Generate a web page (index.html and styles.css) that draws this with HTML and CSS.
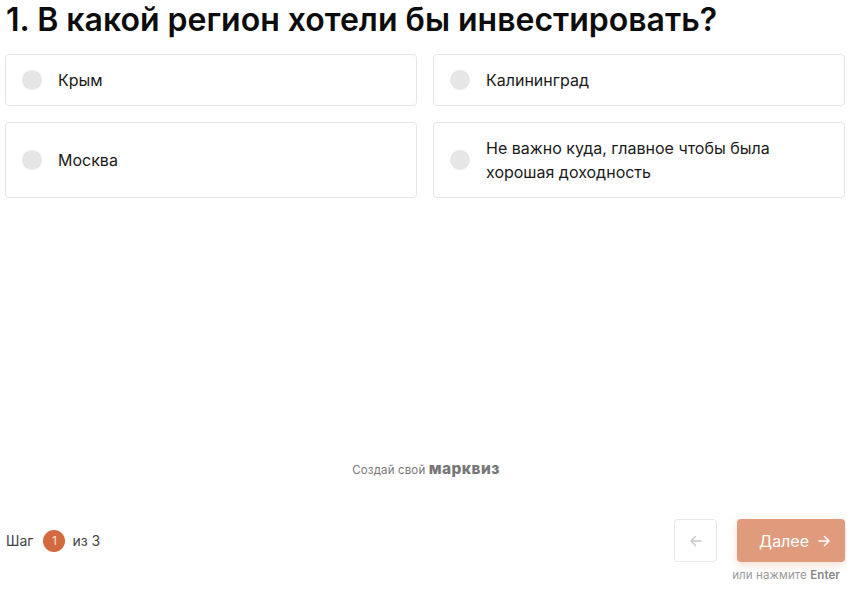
FILE: index.html
```html
<!DOCTYPE html>
<html lang="ru">
<head>
<meta charset="utf-8">
<link rel="stylesheet" href="styles.css">
</head>
<body>
<div class="page">
  <h1 class="title">1. В какой регион хотели бы инвестировать?</h1>
  <div class="options">
    <label class="option"><span class="radio"></span><span class="opt-text">Крым</span></label>
    <label class="option"><span class="radio"></span><span class="opt-text">Калининград</span></label>
    <label class="option tall"><span class="radio"></span><span class="opt-text">Москва</span></label>
    <label class="option tall"><span class="radio"></span><span class="opt-text">Не важно куда, главное чтобы была хорошая доходность</span></label>
  </div>
  <div class="spacer"></div>
  <div class="brand">Создай свой <b>марквиз</b></div>
  <div class="footer">
    <div class="step">Шаг <span class="badge">1</span> из 3</div>
    <div class="nav">
      <div class="buttons">
        <button class="back" type="button">
          <svg width="14" height="14" viewBox="0 0 14 14" fill="none" stroke="#c8c8c8" stroke-width="1.4" stroke-linecap="round" stroke-linejoin="round"><path d="M12 7H2M6.5 2.5L2 7l4.5 4.5"/></svg>
        </button>
        <button class="next" type="button">Далее
          <svg width="14" height="14" viewBox="0 0 14 14" fill="none" stroke="#fff" stroke-width="1.6" stroke-linecap="round" stroke-linejoin="round"><path d="M2 7h10M7.5 2.5L12 7l-4.5 4.5"/></svg>
        </button>
      </div>
      <div class="hint">или нажмите <b>Enter</b></div>
    </div>
  </div>
</div>
</body>
</html>
```
FILE: styles.css
```css
* { box-sizing: border-box; }
html, body { margin: 0; padding: 0; background: #fff; }
body { font-family: Inter, "Noto Sans", sans-serif; color: #111; }
.page {
  width: 847px;
  height: 589px;
  padding: 0 2px 0 5px;
  display: flex;
  flex-direction: column;
}
.title {
  margin: 0;
  padding: 0 0 0 1px;
  font-size: 32px;
  line-height: 39px;
  font-weight: 600;
  color: #0c0c0c;
  letter-spacing: 0;
}
.options {
  margin-top: 15px;
  display: grid;
  grid-template-columns: 412px 412px;
  column-gap: 16px;
  row-gap: 16px;
}
.option {
  display: flex;
  align-items: center;
  min-height: 52px;
  border: 1px solid #e5e5e5;
  border-radius: 4px;
  padding: 10px 16px 10px 16px;
}
.option.tall { min-height: 76px; }
.radio {
  flex: none;
  width: 20px;
  height: 20px;
  border-radius: 50%;
  background: #e6e6e6;
  margin-right: 16px;
}
.opt-text {
  font-size: 16px;
  line-height: 24px;
  color: #1a1a1a;
}
.spacer { flex: 1; }
.brand {
  text-align: center;
  font-size: 11.5px;
  color: #777;
  margin-bottom: 41px;
  margin-right: -2px;
  letter-spacing: 0.15px;
}
.brand b { font-size: 15.5px; font-weight: 800; color: #777; letter-spacing: 0.4px; }
.footer {
  display: flex;
  justify-content: space-between;
  align-items: flex-start;
  padding-bottom: 7px;
}
.step {
  display: flex;
  align-items: center;
  height: 43px;
  font-size: 14px;
  color: #444;
  padding-left: 1px;
}
.badge {
  display: inline-flex;
  align-items: center;
  justify-content: center;
  width: 22px;
  height: 22px;
  border-radius: 50%;
  background: #d2693f;
  color: #fbe3d8;
  font-size: 12px;
  margin: 0 7px 0 10px;
}
.nav { display: flex; flex-direction: column; align-items: flex-end; }
.buttons { display: flex; gap: 20px; }
.back {
  width: 43px;
  height: 43px;
  border: 1px solid #e8e8e8;
  border-radius: 4px;
  background: #fff;
  display: flex;
  align-items: center;
  justify-content: center;
  padding: 0;
}
.next {
  width: 108px;
  height: 43px;
  border: none;
  border-radius: 4px;
  background: #e09a7c;
  color: #fff;
  font-family: Inter, "Noto Sans", sans-serif;
  font-size: 16px;
  display: flex;
  align-items: center;
  justify-content: center;
  gap: 8px;
  padding: 0 0 0 8px;
  box-shadow: 0 3px 8px rgba(224, 154, 124, 0.35);
}
.hint {
  margin-top: 6px;
  margin-right: 5px;
  font-size: 11.5px;
  color: #999;
  letter-spacing: 0.1px;
}
.hint b { color: #888; font-weight: 600; }
```
